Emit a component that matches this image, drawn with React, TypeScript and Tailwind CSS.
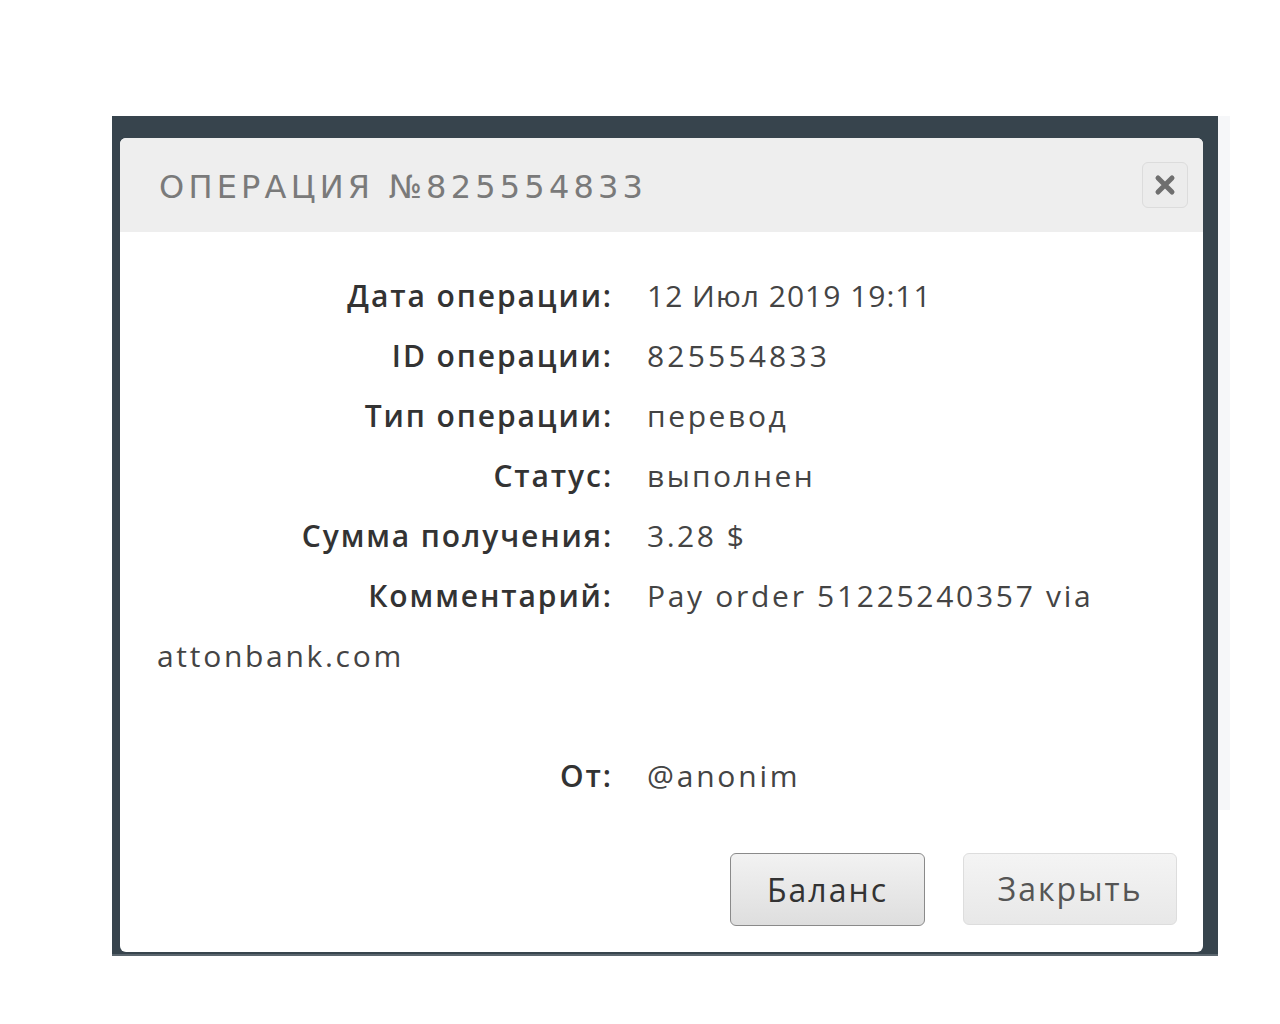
import React from "react";

const rows: [string, string, string][] = [
  ["Дата операции:", "12 Июл 2019 19:11", "tracking-[1px]"],
  ["ID операции:", "825554833", "tracking-[3.2px]"],
  ["Тип операции:", "перевод", "tracking-[2.6px]"],
  ["Статус:", "выполнен", "tracking-[2.4px]"],
  ["Сумма получения:", "3.28 $", "tracking-[2.5px]"],
];

function Label({ children }: { children: React.ReactNode }) {
  return (
    <span className="inline-block w-[456px] text-right font-semibold text-[#333] tracking-[1.9px]">
      {children}
    </span>
  );
}

export default function App() {
  return (
    <div
      className="min-h-[1024px] w-[1280px] bg-white pt-[116px] pl-[112px]"
      style={{ fontFamily: '"Open Sans", "Liberation Sans", sans-serif' }}
    >
      <div className="flex">
        <div className="w-[1106px] h-[840px] bg-[#37444d] pt-[22px] pl-[8px] pr-[15px] pb-[2px] border-b-2 border-[#5b666e]">
          <div className="h-full w-full bg-white rounded-[6px] overflow-hidden flex flex-col">
            <div className="h-[94px] bg-[#eeeeee] flex items-center justify-between pl-[39px] pr-[15px] shrink-0">
              <div
                className="text-[32px] text-[#7a7a7a] tracking-[4.2px] pt-[4px]"
                style={{ fontFamily: '"DejaVu Sans", "Liberation Sans", sans-serif' }}
              >
                ОПЕРАЦИЯ №825554833
              </div>
              <div className="w-[46px] h-[46px] rounded-[6px] border border-[#dcdcdc] bg-[#ececec] flex items-center justify-center">
                <svg width="22" height="22" viewBox="0 0 22 22">
                  <path d="M4 4 L18 18 M18 4 L4 18" stroke="#6f6f6f" strokeWidth="5" strokeLinecap="round" />
                </svg>
              </div>
            </div>
            <div className="pl-[37px] pt-[34px] text-[30px] leading-[60px] text-[#444] pr-[40px]">
              {rows.map(([l, v, t]) => (
                <div key={l}>
                  <Label>{l}</Label>
                  <span className={"ml-[34px] " + t}>{v}</span>
                </div>
              ))}
              <div className="w-[1010px]">
                <Label>Комментарий:</Label>
                <span className="ml-[34px] tracking-[2.7px]">Pay order 51225240357 via attonbank.com</span>
              </div>
              <div>&nbsp;</div>
              <div>
                <Label>От:</Label>
                <span className="ml-[34px] tracking-[2.8px]">@anonim</span>
              </div>
            </div>
            <div className="flex justify-end gap-[38px] pr-[26px] mt-[47px]">
              <button className="w-[195px] h-[73px] rounded-[6px] border border-[#8a8a8a] bg-gradient-to-b from-[#f2f2f2] to-[#dedede] text-[32px] text-[#333] tracking-[2px]">
                Баланс
              </button>
              <button className="w-[214px] h-[72px] rounded-[6px] border border-[#dddddd] bg-gradient-to-b from-[#f4f4f4] to-[#e8e8e8] text-[32px] text-[#555] tracking-[2px]">
                Закрыть
              </button>
            </div>
          </div>
        </div>
        <div className="w-[12px] h-[694px] bg-[#f6f7f9]" />
      </div>
    </div>
  );
}
